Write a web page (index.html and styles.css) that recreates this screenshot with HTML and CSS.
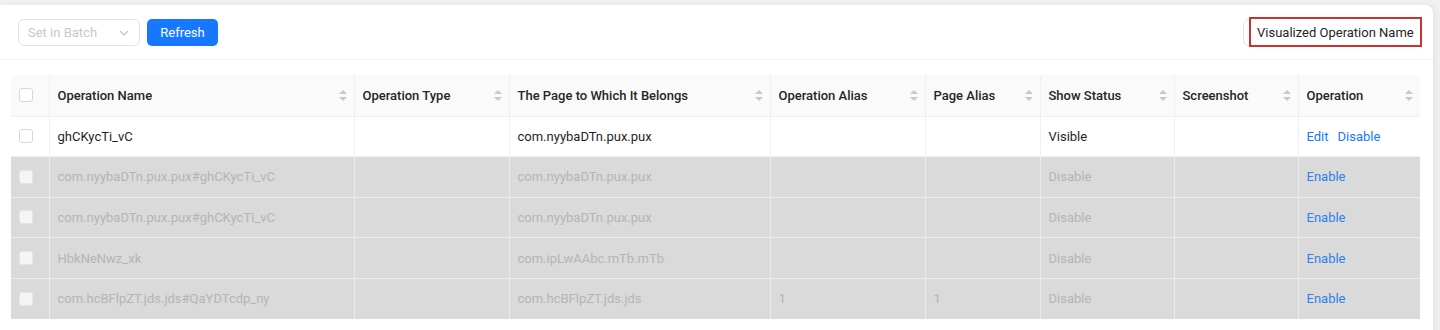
FILE: index.html
```html
<!DOCTYPE html>
<html>
<head>
<meta charset="utf-8">
<link rel="stylesheet" href="styles.css">
</head>
<body>
<div class="card">
  <div class="toolbar">
    <div class="left">
      <div class="select"><span>Set in Batch</span>
        <svg width="12" height="12" viewBox="0 0 12 12"><path d="M2 4l4 4 4-4" fill="none" stroke="#bfbfbf" stroke-width="1.1"/></svg>
      </div>
      <button class="btn">Refresh</button>
    </div>
    <div class="search">
      <div class="mark">Visualized Operation Name</div>
    </div>
  </div>
  <div class="tablewrap">
    <table>
      <colgroup>
        <col style="width:38px"><col style="width:305px"><col style="width:155px"><col style="width:261px"><col style="width:155px"><col style="width:115px"><col style="width:134px"><col style="width:124px"><col style="width:122px">
      </colgroup>
      <thead>
        <tr>
          <th class="chk"><span class="box"></span></th>
          <th><div class="th">Operation Name<i class="sort"></i></div></th>
          <th><div class="th">Operation Type<i class="sort"></i></div></th>
          <th><div class="th">The Page to Which It Belongs<i class="sort"></i></div></th>
          <th><div class="th">Operation Alias<i class="sort"></i></div></th>
          <th><div class="th">Page Alias<i class="sort"></i></div></th>
          <th><div class="th">Show Status<i class="sort"></i></div></th>
          <th><div class="th">Screenshot<i class="sort"></i></div></th>
          <th><div class="th">Operation<i class="sort"></i></div></th>
        </tr>
      </thead>
      <tbody>
        <tr>
          <td class="chk"><span class="box"></span></td>
          <td>ghCKycTi_vC</td><td></td><td>com.nyybaDTn.pux.pux</td><td></td><td></td><td>Visible</td><td></td>
          <td><a class="link">Edit</a><a class="link">Disable</a></td>
        </tr>
        <tr class="off">
          <td class="chk"><span class="box"></span></td>
          <td>com.nyybaDTn.pux.pux#ghCKycTi_vC</td><td></td><td>com.nyybaDTn.pux.pux</td><td></td><td></td><td>Disable</td><td></td>
          <td><a class="link">Enable</a></td>
        </tr>
        <tr class="off">
          <td class="chk"><span class="box"></span></td>
          <td>com.nyybaDTn.pux.pux#ghCKycTi_vC</td><td></td><td>com.nyybaDTn.pux.pux</td><td></td><td></td><td>Disable</td><td></td>
          <td><a class="link">Enable</a></td>
        </tr>
        <tr class="off">
          <td class="chk"><span class="box"></span></td>
          <td>HbkNeNwz_xk</td><td></td><td>com.ipLwAAbc.mTb.mTb</td><td></td><td></td><td>Disable</td><td></td>
          <td><a class="link">Enable</a></td>
        </tr>
        <tr class="off">
          <td class="chk"><span class="box"></span></td>
          <td>com.hcBFlpZT.jds.jds#QaYDTcdp_ny</td><td></td><td>com.hcBFlpZT.jds.jds</td><td>1</td><td>1</td><td>Disable</td><td></td>
          <td><a class="link">Enable</a></td>
        </tr>
      </tbody>
    </table>
  </div>
</div>
</body>
</html>
```

FILE: styles.css
```css
* { box-sizing: border-box; }
html, body { margin: 0; padding: 0; }
body {
  background: #f0f1f3;
  font-family: Roboto, "Noto Sans", sans-serif;
  font-size: 13px;
  color: #1f1f1f;
  width: 1440px;
  height: 330px;
  overflow: hidden;
}
.card {
  margin: 5px 7px 0 0;
  background: #fff;
  border-radius: 0 8px 0 0;
  box-shadow: 2px 0 6px rgba(0,0,0,0.06);
  height: 340px;
}
.toolbar {
  display: flex;
  justify-content: space-between;
  align-items: flex-start;
  padding: 14px 11px 0 18px;
  height: 55px;
  border-bottom: 1px solid #f2f2f2;
}
.left { display: flex; gap: 7px; align-items: center; }
.select {
  width: 122px;
  height: 27px;
  border: 1px solid #e3e3e3;
  border-radius: 6px;
  display: flex;
  align-items: center;
  justify-content: space-between;
  padding: 0 9px 0 9px;
  color: #c8c8c8;
}
.btn {
  height: 27px;
  width: 71px;
  border: none;
  border-radius: 5px;
  background: #1677ff;
  color: #fff;
  font-family: inherit;
  font-size: 13px;
  padding: 0;
}
.search {
  width: 179px;
  height: 27px;
  border: 1px solid #e3e3e3;
  border-radius: 6px;
  position: relative;
}
.mark {
  position: absolute;
  left: 5px;
  right: -1px;
  top: -3px;
  height: 30px;
  border: 2px solid #c8332b;
  background: #fff;
  display: flex;
  align-items: center;
  padding-left: 6px;
  color: #1f1f1f;
  white-space: nowrap;
}
.tablewrap { padding: 15px 0 0 11px; }
table {
  border-collapse: collapse;
  table-layout: fixed;
  width: 1409px;
}
th, td {
  border: 1px solid #f0f0f0;
  height: 40.6px;
  padding: 0 8px;
  text-align: left;
  white-space: nowrap;
  overflow: hidden;
}
thead th { border-top: none; }
th {
  background: #fafafa;
  font-weight: 500;
  color: #262626;
  height: 41px;
}
tr > :first-child { border-left: none; }
tr > :last-child { border-right: none; }
.th { display: flex; justify-content: space-between; align-items: center; }
.sort {
  display: inline-block;
  width: 8px;
  height: 11px;
  position: relative;
  margin-right: -1px;
}
.sort::before, .sort::after {
  content: "";
  position: absolute;
  left: 0;
  border-left: 4px solid transparent;
  border-right: 4px solid transparent;
}
.sort::before { top: 0; border-bottom: 4px solid #c8c8c8; }
.sort::after { bottom: 0; border-top: 4px solid #c8c8c8; }
.chk { padding: 0 0 0 8px; }
.box {
  display: block;
  width: 14px;
  height: 14px;
  border: 1px solid #d6d6d6;
  border-radius: 3px;
  background: #fff;
}
tr.off td {
  background: #dadada;
  color: #b5b5b5;
  border-color: #ebebeb;
}
tr.off .box { border-color: #e6e6e6; background: #f5f5f5; }
tbody tr:last-child td { border-bottom: none; }
.link { color: #1677ff; margin-right: 9px; }
tr.off .link { color: #2f80f0; }
```
